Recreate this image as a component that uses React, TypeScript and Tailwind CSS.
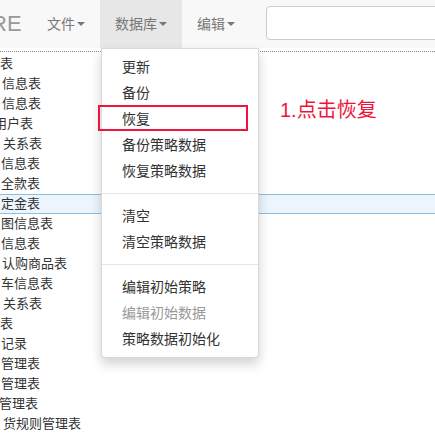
const ROWS: { text: string; shift?: number; active?: boolean }[] = [
  { text: "表" },
  { text: "信息表", shift: 2 },
  { text: "信息表", shift: 2 },
  { text: "用户表", shift: -6 },
  { text: "关系表", shift: 3 },
  { text: "信息表", shift: 1 },
  { text: "全款表", shift: 1 },
  { text: "定金表", shift: 1, active: true },
  { text: "图信息表", shift: 1 },
  { text: "信息表", shift: 1 },
  { text: "认购商品表", shift: 2 },
  { text: "车信息表", shift: 1 },
  { text: "关系表", shift: 3 },
  { text: "表" },
  { text: "记录", shift: 1 },
  { text: "管理表", shift: 1 },
  { text: "管理表", shift: 1 },
  { text: "管理表", shift: -1 },
  { text: "货规则管理表", shift: 3 },
];

type Item = { label: string; disabled?: boolean } | "divider";

const MENU: Item[] = [
  { label: "更新" },
  { label: "备份" },
  { label: "恢复" },
  { label: "备份策略数据" },
  { label: "恢复策略数据" },
  "divider",
  { label: "清空" },
  { label: "清空策略数据" },
  "divider",
  { label: "编辑初始策略" },
  { label: "编辑初始数据", disabled: true },
  { label: "策略数据初始化" },
];

function Caret() {
  return (
    <span className="ml-[2px] inline-block h-0 w-0 border-x-4 border-t-4 border-x-transparent border-t-[#777] align-middle" />
  );
}

function NavItem({ label, active }: { label: string; active?: boolean }) {
  return (
    <div
      className={
        "flex h-full shrink-0 items-center whitespace-nowrap px-[15px] text-[14px] text-[#777] " +
        (active ? "bg-[#e7e7e7]" : "")
      }
    >
      {label}
      <Caret />
    </div>
  );
}

export default function App() {
  return (
    <div
      className="relative h-[435px] w-[435px] overflow-hidden bg-white"
      style={{ fontFamily: '"Liberation Sans", "Noto Sans CJK SC", sans-serif' }}
    >
      <div className="flex h-[48px] bg-[#f8f8f8]">
        <div className="flex w-[32px] shrink-0 items-center overflow-hidden">
          <span className="-ml-[9px] text-[22px] leading-none text-[#999]">RE</span>
        </div>
        <NavItem label="文件" />
        <NavItem label="数据库" active />
        <NavItem label="编辑" />
        <div className="ml-[16px] mt-[6px] h-[34px] w-[200px] shrink-0 rounded-[4px] border border-[#ccc] bg-white" />
      </div>
      <div className="mt-[3px] border-t border-dotted border-[#888]" />

      <div className="pt-[2px]">
        {ROWS.map((r, i) => (
          <div
            key={i}
            className={
              "h-[20px] whitespace-nowrap text-[13px] leading-[18px] text-[#333] " +
              (r.active ? "border-y border-[#8dc0e3] bg-[#ecf5fc]" : "border-y border-transparent")
            }
          >
            <span className="inline-block" style={{ marginLeft: r.shift ?? 0 }}>
              {r.text}
            </span>
          </div>
        ))}
      </div>

      <div className="absolute left-[101px] top-[48px] w-[158px] rounded-b-[4px] border border-[rgba(0,0,0,0.15)] bg-white py-[5px] shadow-[0_6px_12px_rgba(0,0,0,0.175)]">
        {MENU.map((m, i) =>
          m === "divider" ? (
            <div key={i} className="my-[9px] h-px bg-[#e5e5e5]" />
          ) : (
            <div
              key={i}
              className={
                "whitespace-nowrap px-[20px] py-[3px] text-[14px] leading-[20px] " +
                (m.disabled ? "text-[#999]" : "text-[#333]")
              }
            >
              {m.label}
            </div>
          )
        )}
      </div>

      <div className="absolute left-[98px] top-[105px] h-[26px] w-[150px] border-2 border-[#f0143c]" />
      <div className="absolute left-[280px] top-[96px] whitespace-nowrap text-[20px] leading-[28px] text-[#f0143c]">
        1.点击恢复
      </div>
    </div>
  );
}
